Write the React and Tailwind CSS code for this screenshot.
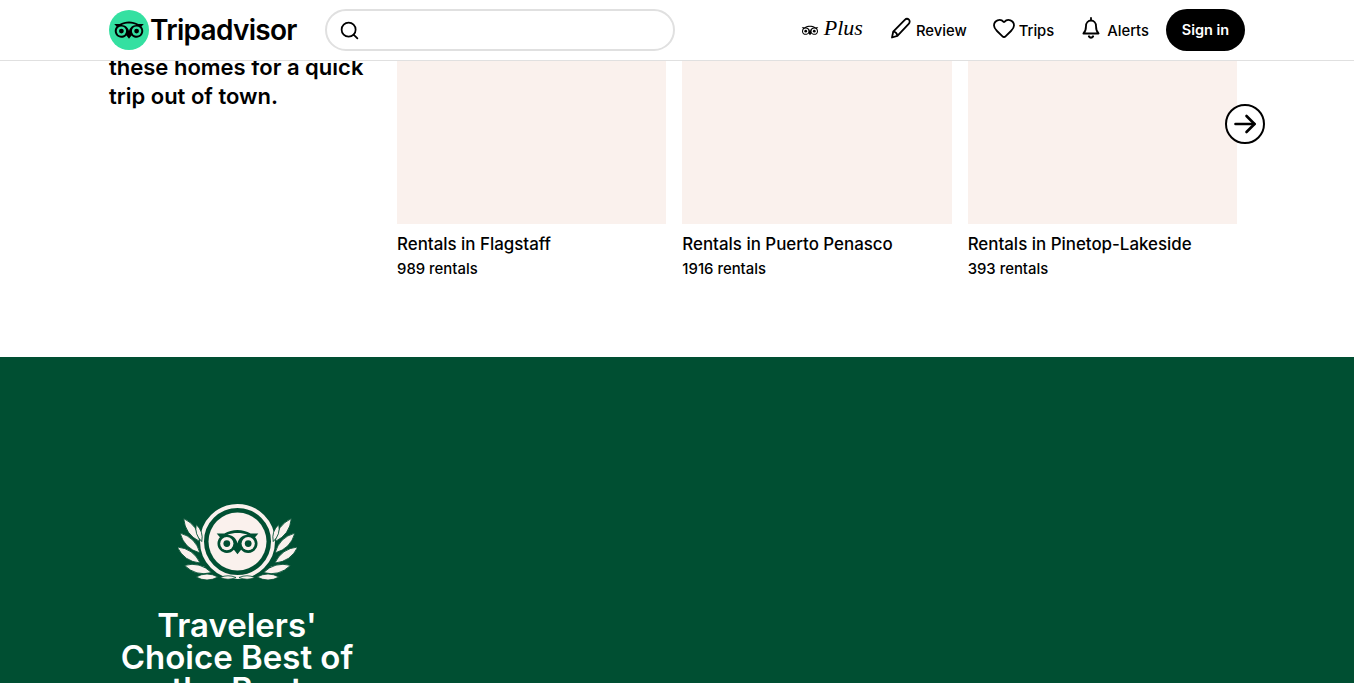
import { Search, Heart } from 'lucide-react'

const OwlEyes = ({ fg, bg }) => (
  <>
    <path d="M1.500 3.500h6.800C11.800 1.500 15.800.4 20 .4s8.200 1.100 11.700 3.100h6.800l-2.900 3.200c1.400 1.500 2.200 3.500 2.200 5.700 0 4.600-3.700 8.300-8.300 8.300-2.500 0-4.800-1.100-6.300-2.900L20 21.800l-3.200-4c-1.500 1.800-3.800 2.900-6.300 2.900-4.600 0-8.300-3.700-8.300-8.300 0-2.200.8-4.200 2.200-5.700z" fill={fg} />
    <path d="M11 4.600c2.800-1.100 5.900-1.700 9-1.700s6.200.6 9 1.700c-4.700.1-8 3.200-9 7.700-1-4.500-4.300-7.600-9-7.700z" fill={bg} />
    <circle cx="10.500" cy="12.400" r="5.900" fill={bg} />
    <circle cx="29.500" cy="12.400" r="5.900" fill={bg} />
    <circle cx="10.500" cy="12.400" r="3" fill={fg} />
    <circle cx="29.500" cy="12.400" r="3" fill={fg} />
  </>
)

const Logo = () => (
  <div className="flex items-center gap-[2px]">
    <div className="flex h-10 w-10 items-center justify-center rounded-full bg-[#34e0a1]">
      <svg viewBox="0 0 40 22" className="h-[18px] w-[32px]">
        <OwlEyes fg="#000000" bg="#34e0a1" />
      </svg>
    </div>
    <span className="-ml-[1px] text-[28px] font-semibold leading-none tracking-[-0.7px] text-black">Tripadvisor</span>
  </div>
)

const leaves = [
  { x: 13.700, y: 26, r: -35, h: 14, w: 8 },
  { x: 21, y: 29, r: -18, h: 9, w: 5 },
  { x: 12, y: 39, r: -45, h: 14, w: 8 },
  { x: 10.700, y: 51, r: -55, h: 14, w: 8 },
  { x: 20, y: 65, r: -75, h: 14, w: 8 },
  { x: 29, y: 73, r: -90, h: 11, w: 6 },
  { x: 50, y: 73.500, r: -90, h: 8, w: 3.500 },
]

const Leaf = ({ x, y, r, h, w }) => (
  <path
    d={`M0 ${-h}Q${w} 0 0 ${h}Q${-w} 0 0 ${-h}z`}
    transform={`translate(${x} ${y}) rotate(${r})`}
    fill="#faf1ed"
    stroke="#004f32"
    strokeWidth="0.800"
  />
)

const Badge = () => (
  <svg viewBox="0 0 119 76" className="h-[76px] w-[119px]">
    <circle cx="59.500" cy="37.500" r="35.500" fill="none" stroke="#faf1ed" strokeWidth="4" />
    <circle cx="59.500" cy="37.500" r="29" fill="#faf1ed" />
    <svg x="37" y="25" width="45" height="26" viewBox="0 0 40 22">
      <OwlEyes fg="#004f32" bg="#faf1ed" />
    </svg>
    {leaves.map((l, i) => (
      <g key={i}>
        <Leaf {...l} />
        <Leaf {...l} x={119 - l.x} r={-l.r} />
      </g>
    ))}
  </svg>
)

const PlusMark = () => (
  <svg viewBox="0 0 40 22" className="h-[11px] w-[18px]">
    <OwlEyes fg="#000000" bg="#ffffff" />
  </svg>
)

const PencilIcon = () => (
  <svg viewBox="0 0 22 22" className="h-[22px] w-[22px]" fill="none" stroke="black" strokeWidth="1.800" strokeLinejoin="round">
    <path d="M2 20.500l1.200-5.800L14.800 2.900c1.200-1.200 3-1.300 4.100-.2s1 2.900-.2 4.100L7.400 18.800z" />
    <path d="M3.400 14.700c1.900.2 3.600 1.900 3.900 4" />
  </svg>
)

const BellIcon = () => (
  <svg viewBox="0 0 20 22" className="h-[22px] w-[20px]" fill="none" stroke="black" strokeWidth="1.800" strokeLinejoin="round" strokeLinecap="round">
    <path d="M10 1v2" />
    <path d="M5 9c0-3.200 2.200-5.500 5-5.500s5 2.300 5 5.500c0 4 1 6 2.600 7.500H2.400C4 15 5 13 5 9z" />
    <path d="M8 19.500c.5.800 1.200 1.200 2 1.200s1.500-.4 2-1.200" strokeWidth="2.200" />
  </svg>
)

const ArrowIcon = () => (
  <svg viewBox="0 0 24 24" className="h-6 w-6" fill="none" stroke="black" strokeWidth="2.600" strokeLinecap="round" strokeLinejoin="round">
    <path d="M2.500 12h19" />
    <path d="M13.500 4l8 8-8 8" />
  </svg>
)

const rentals = [
  { name: 'Rentals in Flagstaff', count: '989 rentals' },
  { name: 'Rentals in Puerto Penasco', count: '1916 rentals' },
  { name: 'Rentals in Pinetop-Lakeside', count: '393 rentals' },
]

export default function App() {
  return (
    <div className="h-[683px] w-[1354px] overflow-hidden bg-white font-['Inter',sans-serif] text-black">
      {/* Header */}
      <header className="relative z-10 h-[61px] border-b border-[#e0e0e0] bg-white">
        <div className="flex h-[60px] items-center pl-[109px] pr-[109px]">
          <Logo />
          <div className="ml-[28px] flex h-[42px] w-[350px] items-center rounded-full border-2 border-[#e0e0e0] pl-[12px]">
            <Search size={21} strokeWidth={2} />
          </div>
          <nav className="ml-auto flex items-center text-[14.800px] font-medium">
            <div className="flex items-center gap-[5px]">
              <PlusMark />
              <span className="-mt-[4px] font-['Liberation_Serif',serif] text-[22px] italic leading-none">Plus</span>
            </div>
            <div className="ml-[27px] flex items-center gap-[4px]">
              <span className="-mt-[5px]"><PencilIcon /></span>
              <span className="mt-[3px]">Review</span>
            </div>
            <div className="ml-[25px] flex items-center gap-[3px]">
              <Heart size={24} strokeWidth={1.800} className="-mt-[5px]" />
              <span className="mt-[3px]">Trips</span>
            </div>
            <div className="ml-[27px] flex items-center gap-[6px]">
              <span className="-mt-[4px]"><BellIcon /></span>
              <span className="mt-[3px]">Alerts</span>
            </div>
            <button className="ml-[17px] h-[42px] w-[79px] rounded-full bg-black text-[14.500px] font-semibold text-white">Sign in</button>
          </nav>
        </div>
      </header>

      {/* Rentals */}
      <section className="relative flex h-[296px] pl-[109px]">
        <div className="w-[288px] pr-[20px]">
          <p className="-mt-[8px] text-[22px] font-semibold leading-[29px]">
            these homes for a quick
            <br />
            trip out of town.
          </p>
        </div>
        <div className="flex gap-[16px]">
          {rentals.map((r) => (
            <div key={r.name} className="w-[269.330px]">
              <div className="h-[163px] bg-[#faf1ed]" />
              <div className="mt-[9px] text-[16.900px] font-medium leading-[22px]">{r.name}</div>
              <div className="mt-[4px] text-[14.900px] font-medium leading-[20px]">{r.count}</div>
            </div>
          ))}
        </div>
        <button className="absolute left-[1225px] top-[43px] flex h-10 w-10 items-center justify-center rounded-full border-2 border-black bg-white">
          <ArrowIcon />
        </button>
      </section>

      {/* Travelers' Choice */}
      <section className="h-[326px] bg-[#004f32] pl-[109px] pt-[147px]">
        <div className="flex w-[256px] flex-col items-center">
          <Badge />
          <h2 className="mt-[29px] text-center text-[33px] font-semibold leading-[32px] text-white">
            Travelers'
            <br />
            Choice Best of
            <br />
            the Best
          </h2>
        </div>
      </section>
    </div>
  )
}
